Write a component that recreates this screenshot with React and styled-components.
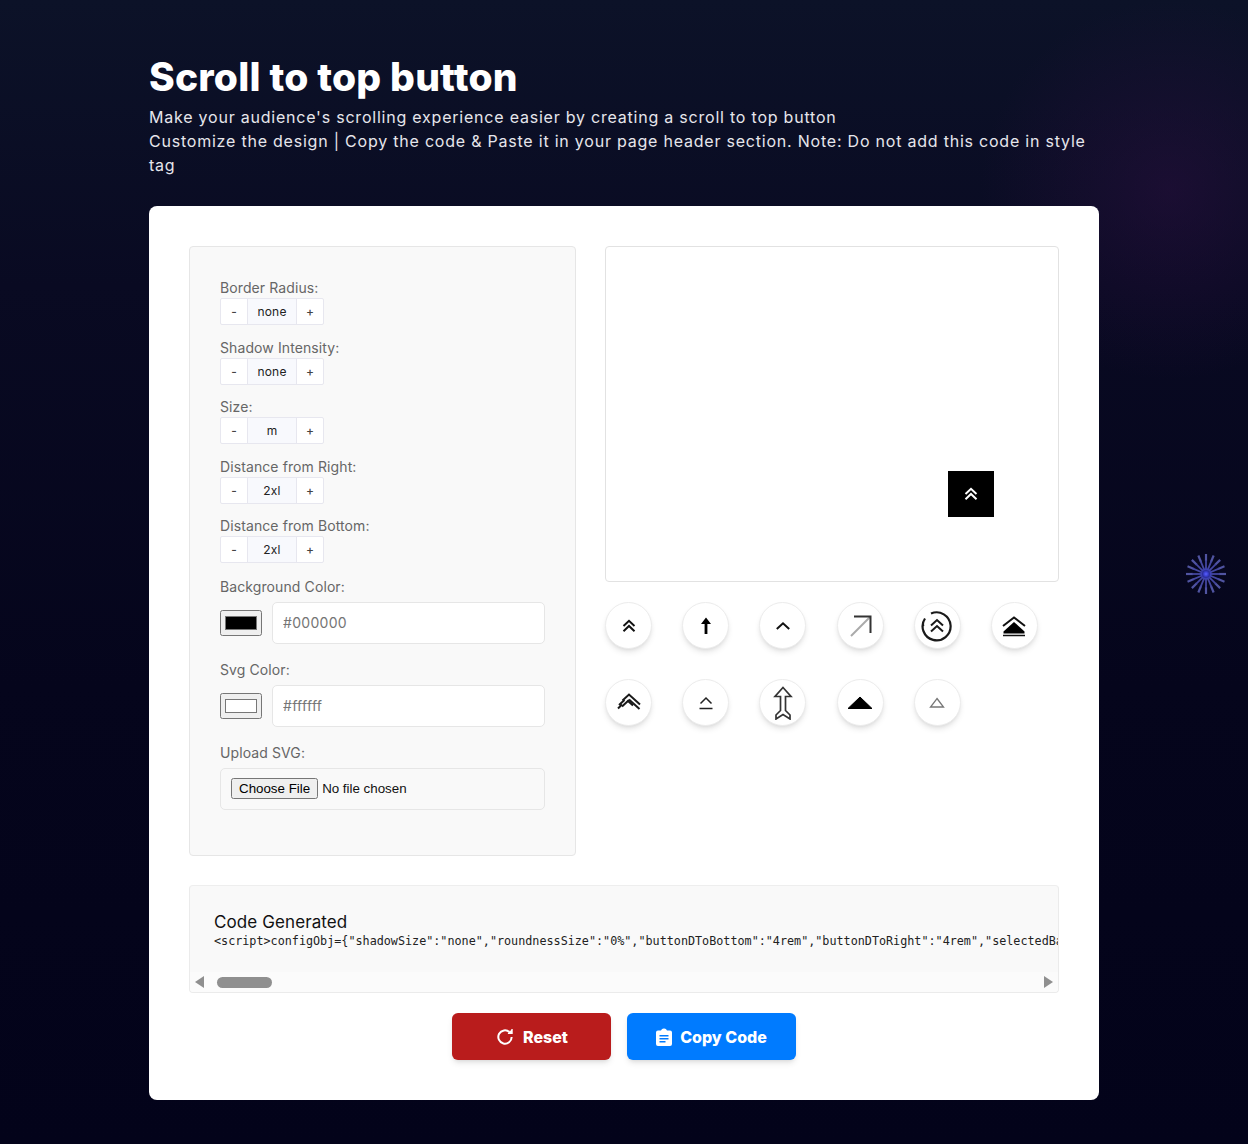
import React from "react";
import styled, { createGlobalStyle } from "styled-components";

const Global = createGlobalStyle`
  html, body { margin: 0; padding: 0; }
  body {
    min-height: 1144px;
    background-color: #05051c;
    background-image:
      radial-gradient(circle 190px at 1170px 190px, rgba(50, 16, 70, 0.42), rgba(50, 16, 70, 0)),
      linear-gradient(180deg, #0c1228 0%, #090a22 25%, #05051c 60%, #03031a 100%);
    font-family: Inter, "Liberation Sans", sans-serif;
  }
  * { box-sizing: border-box; }
`;

const Page = styled.div`
  position: relative;
  width: 1248px;
  height: 1144px;
  overflow: hidden;
  padding: 52px 149px 0;
`;
const Title = styled.h1`
  margin: 0;
  color: #fff;
  font-size: 39px;
  line-height: 50px;
  font-weight: 800;
  letter-spacing: 0.2px;
`;
const Intro = styled.p`
  margin: 3px 0 0;
  width: 950px;
  color: #e6e6ec;
  font-size: 16px;
  line-height: 24px;
  letter-spacing: 0.78px;
`;
const Card = styled.main`
  margin-top: 29px;
  width: 950px;
  height: 894px;
  background: #fff;
  border-radius: 8px;
  padding: 40px;
`;
const Top = styled.div`
  display: flex;
  gap: 29px;
  align-items: flex-start;
`;
const Settings = styled.section`
  width: 387px;
  height: 610px;
  flex: none;
  background: #f9f9f9;
  border: 1px solid #e6e6e6;
  border-radius: 4px;
  padding: 30px;
`;
const Field = styled.div`
  height: 59.6px;
`;
const Label = styled.div`
  color: #666;
  font-size: 14px;
  line-height: 21px;
  letter-spacing: 0.1px;
`;
const Stepper = styled.div`
  display: flex;
  width: 104px;
  height: 27px;
  border: 1px solid #e7e7ef;
  border-radius: 2px;
  background: #fff;
`;
const StepBtn = styled.span`
  width: 26px;
  display: flex;
  align-items: center;
  justify-content: center;
  color: #444;
  font-size: 12px;
  font-weight: 500;
`;
const StepValue = styled.span`
  flex: 1;
  display: flex;
  align-items: center;
  justify-content: center;
  background: #f8f9fd;
  border-left: 1px solid #e7e7ef;
  border-right: 1px solid #e7e7ef;
  color: #222;
  font-size: 12px;
  letter-spacing: 0.2px;
`;
const ColorSection = styled.div`
  margin-top: 1px;
`;
const ColorRow = styled.div`
  display: flex;
  align-items: center;
  gap: 10px;
  margin: 5px 0 15px;
`;
const Swatch = styled.input`
  width: 42px;
  height: 26px;
  margin: 0;
  padding: 1px 2px;
  flex: none;
`;
const TextInput = styled.input`
  width: 273px;
  height: 42px;
  border: 1px solid #e6e6e6;
  border-radius: 5px;
  background: #fff;
  padding: 0 10px;
  font-family: inherit;
  font-size: 14px;
  letter-spacing: 0.3px;
  &::placeholder { color: #757575; opacity: 1; }
`;
const UploadBox = styled.div`
  margin-top: 5px;
  width: 325px;
  height: 42px;
  display: flex;
  align-items: center;
  border: 1px solid #e6e6e6;
  border-radius: 5px;
  padding: 0 10px;
  background: #f9f9f9;
`;
const FileInput = styled.input`
  font-family: "Liberation Sans", Arial, sans-serif;
  font-size: 13.33px;
  color: #111;
`;
const Right = styled.section`
  flex: 1;
`;
const Preview = styled.div`
  position: relative;
  height: 336px;
  border: 1px solid #e2e2e2;
  border-radius: 4px;
  background: #fff;
`;
const PreviewButton = styled.div`
  position: absolute;
  right: 64px;
  bottom: 64px;
  width: 46px;
  height: 46px;
  background: #000;
  display: flex;
  align-items: center;
  justify-content: center;
`;
const IconGrid = styled.div`
  margin-top: 20px;
  display: grid;
  grid-template-columns: repeat(6, 47px);
  column-gap: 30.2px;
  row-gap: 30px;
`;
const IconCircle = styled.div`
  width: 47px;
  height: 47px;
  border-radius: 50%;
  background: #fff;
  border: 1px solid #ececec;
  box-shadow: 0 4px 6px -1px rgba(0,0,0,.1), 0 2px 4px -2px rgba(0,0,0,.1);
  display: flex;
  align-items: center;
  justify-content: center;
`;
const CodeBox = styled.section`
  margin-top: 29px;
  height: 108px;
  border: 1px solid #ebebeb;
  border-top-color: #eee;
  border-radius: 4px;
  background: #f9f9f9;
  display: flex;
  flex-direction: column;
  overflow: hidden;
`;
const CodeBody = styled.div`
  flex: 1;
  padding: 26px 0 0 24px;
  overflow: hidden;
`;
const CodeTitle = styled.div`
  color: #111;
  font-size: 17px;
  line-height: 20px;
  letter-spacing: 0.1px;
`;
const CodeLine = styled.div`
  color: #222;
  font-family: "DejaVu Sans Mono", "Liberation Mono", monospace;
  font-size: 11.75px;
  line-height: 18px;
  white-space: nowrap;
`;
const ScrollTrack = styled.div`
  height: 20px;
  flex: none;
  background: #fbfbfb;
  display: flex;
  align-items: center;
  justify-content: space-between;
  padding: 0 5px;
`;
const ScrollThumb = styled.div`
  width: 55px;
  height: 11px;
  border-radius: 6px;
  background: #8f8f8f;
  margin-left: 13px;
  margin-right: auto;
`;
const Arrow = styled.span`
  width: 0;
  height: 0;
  border-top: 6px solid transparent;
  border-bottom: 6px solid transparent;
  ${p => (p.$dir === "left" ? "border-right: 9px solid #8f8f8f;" : "border-left: 9px solid #8f8f8f;")}
`;
const Actions = styled.div`
  margin-top: 20px;
  display: flex;
  justify-content: center;
  gap: 16px;
`;
const ActionButton = styled.button`
  width: ${p => p.$w}px;
  height: 47px;
  border: 0;
  border-radius: 6px;
  background: ${p => p.$bg};
  color: #fff;
  font-family: inherit;
  font-weight: 800;
  font-size: 16px;
  display: flex;
  align-items: center;
  justify-content: center;
  gap: 8px;
  box-shadow: 0 4px 6px -1px rgba(0,0,0,.1), 0 2px 4px -2px rgba(0,0,0,.1);
`;
const Spinner = styled.svg`
  position: absolute;
  left: 1184px;
  top: 552px;
`;

const DoubleUp = ({ color = "#111", size = 18 }) => (
  <svg width={size} height={size} viewBox="0 0 18 18" fill="none" stroke={color} strokeWidth="2">
    <path d="M3.5 9 9 3.8 14.5 9" />
    <path d="M3.5 14.2 9 9 14.5 14.2" />
  </svg>
);
const icons = [
  <DoubleUp key="a" />,
  <svg key="b" width="20" height="20" viewBox="0 0 20 20" fill="#000"><path d="M10 1.5 15 8h-3.6v10H8.600V8H5z" /></svg>,
  <svg key="c" width="18" height="18" viewBox="0 0 18 18" fill="none" stroke="#111" strokeWidth="2"><path d="M2.800 12 9 6.300 15.200 12" /></svg>,
  <svg key="d" width="26" height="26" viewBox="0 0 26 26" fill="none" strokeWidth="2"><path d="M4 23 23 4" stroke="#aaa" /><path d="M7 3.500h16.500V20" stroke="#333" /></svg>,
  <svg key="e" width="34" height="34" viewBox="0 0 34 34" fill="none" stroke="#1a1a1a"><path d="M11 4.500A14 14 0 1 1 5 9.500M3.400 15.500A14 14 0 0 0 3 17" strokeWidth="2.200" /><path d="M11 16.500 17 11l6 5.500M11 22.500 17 17l6 5.500" strokeWidth="2" /></svg>,
  <svg key="f" width="26" height="26" viewBox="0 0 26 26"><path d="M2 13 13 4.500 24 13" fill="none" stroke="#111" strokeWidth="2" /><path d="M13 9 2.500 18.500v2h21v-2z" fill="#000" /><path d="M2 22.500h22" stroke="#111" strokeWidth="1.500" /></svg>,
  <svg key="g" width="26" height="26" viewBox="0 0 26 26" fill="none" stroke="#1a1a1a" strokeWidth="2"><path d="M3 15 8.500 10M13 10 6 16.500" /><path d="M6.500 10.500 13 4.500l11 10" /><path d="M13 9.500 23.500 19" /><path d="M11.500 10.500 17 15.500M2 18.500l4-4" /></svg>,
  <svg key="h" width="16" height="14" viewBox="0 0 16 14" fill="none" stroke="#222" strokeWidth="1.500"><path d="M2.500 7.500 8 2l5.500 5.500" /><path d="M1.500 12.500h13" /></svg>,
  <svg key="i" width="20" height="34" viewBox="0 0 20 34" fill="none" stroke="#333" strokeWidth="1.700"><path d="M10 1.500 18 10.500h-5.500v14L17 29v4l-7-4.500L3 33v-4l4.500-4.500v-14H2z" /></svg>,
  <svg key="j" width="26" height="14" viewBox="0 0 26 14"><path d="M13 1 25 12.500H1z" fill="#000" stroke="#000" /></svg>,
  <svg key="k" width="16" height="12" viewBox="0 0 16 12" fill="none" stroke="#777" strokeWidth="1.300"><path d="M8 1.500 14.500 10h-13z" /></svg>,
];
const steppers = [
  ["Border Radius:", "none"],
  ["Shadow Intensity:", "none"],
  ["Size:", "m"],
  ["Distance from Right:", "2xl"],
  ["Distance from Bottom:", "2xl"],
];
const code = '<script>configObj={"shadowSize":"none","roundnessSize":"0%","buttonDToBottom":"4rem","buttonDToRight":"4rem","selectedBackgroundColor":"#000000","selectedSvgColor":"#ffffff"}';
const rays = Array.from({ length: 16 }, (_, i) => i * 22.5);

export default function App() {
  return (
    <Page>
      <Global />
      <Title>Scroll to top button</Title>
      <Intro>
        Make your audience's scrolling experience easier by creating a scroll to top button<br />
        Customize the design | Copy the code &amp; Paste it in your page header section. Note: Do not add this code in style tag
      </Intro>
      <Card>
        <Top>
          <Settings>
            {steppers.map(([label, value]) => (
              <Field key={label}>
                <Label>{label}</Label>
                <Stepper>
                  <StepBtn>-</StepBtn>
                  <StepValue>{value}</StepValue>
                  <StepBtn>+</StepBtn>
                </Stepper>
              </Field>
            ))}
            <ColorSection>
              <Label>Background Color:</Label>
              <ColorRow>
                <Swatch type="color" defaultValue="#000000" />
                <TextInput placeholder="#000000" />
              </ColorRow>
              <Label>Svg Color:</Label>
              <ColorRow>
                <Swatch type="color" defaultValue="#ffffff" />
                <TextInput placeholder="#ffffff" />
              </ColorRow>
              <Label>Upload SVG:</Label>
              <UploadBox><FileInput type="file" /></UploadBox>
            </ColorSection>
          </Settings>
          <Right>
            <Preview>
              <PreviewButton><DoubleUp color="#fff" /></PreviewButton>
            </Preview>
            <IconGrid>
              {icons.map((icon, i) => <IconCircle key={i}>{icon}</IconCircle>)}
            </IconGrid>
          </Right>
        </Top>
        <CodeBox>
          <CodeBody>
            <CodeTitle>Code Generated</CodeTitle>
            <CodeLine>{code}</CodeLine>
          </CodeBody>
          <ScrollTrack>
            <Arrow $dir="left" />
            <ScrollThumb />
            <Arrow $dir="right" />
          </ScrollTrack>
        </CodeBox>
        <Actions>
          <ActionButton $bg="#b91c1c" $w={159}>
            <svg width="20" height="20" viewBox="0 0 24 24" fill="none" stroke="#fff" strokeWidth="2.400"><path d="M20 12a8 8 0 1 1-2.600-5.900" /><path d="M20.500 2.500v5h-5" fill="#fff" strokeWidth="1.500" /></svg>
            Reset
          </ActionButton>
          <ActionButton $bg="#007bff" $w={169}>
            <svg width="16" height="18" viewBox="0 0 16 18"><path fill="#fff" fillRule="evenodd" d="M2 2.500h3A3 3 0 0 1 8 .5a3 3 0 0 1 3 2h3a2 2 0 0 1 2 2V16a2 2 0 0 1-2 2H2a2 2 0 0 1-2-2V4.500a2 2 0 0 1 2-2zM3.500 7v1.500h9V7zm0 3v1.500h9V10zm0 3v1.500h6V13z" /></svg>
            Copy Code
          </ActionButton>
        </Actions>
      </Card>
      <Spinner width="44" height="44" viewBox="0 0 44 44">
        <defs>
          <radialGradient id="glow">
            <stop offset="0" stopColor="#5a62ff" />
            <stop offset="0.3" stopColor="#3a3fd0" />
            <stop offset="1" stopColor="#3a3fd0" stopOpacity="0" />
          </radialGradient>
        </defs>
        {rays.map(a => (
          <line key={a} x1="22" y1="9" x2="22" y2="2" stroke="#5d62b8" strokeWidth="2.200" opacity="0.85" transform={`rotate(${a} 22 22)`} />
        ))}
        {rays.map(a => (
          <line key={`i${a}`} x1="22" y1="18" x2="22" y2="8" stroke="#44479f" strokeWidth="1.800" transform={`rotate(${a} 22 22)`} />
        ))}
        <circle cx="22" cy="22" r="7" fill="url(#glow)" />
      </Spinner>
    </Page>
  );
}
